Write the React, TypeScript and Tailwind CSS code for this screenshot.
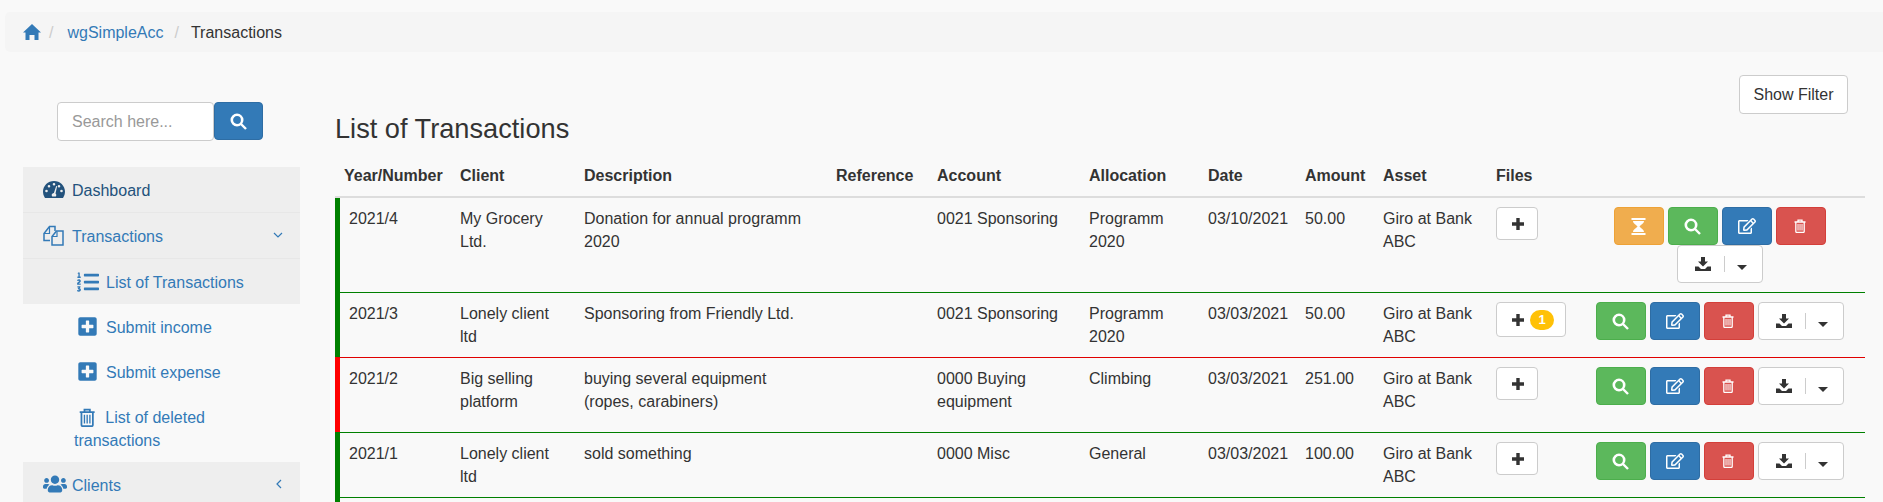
import { ReactNode } from "react";
import { FaListOl, FaPlusSquare, FaRegEdit, FaUsers } from "react-icons/fa";

type Row = {
  num: string;
  client: string;
  desc: string;
  account: string;
  allocation: string;
  date: string;
  amount: string;
  color: "green" | "red";
  height: string;
  files?: number;
  pending?: boolean;
};

const rows: Row[] = [
  { num: "2021/4", client: "My Grocery Ltd.", desc: "Donation for annual programm 2020", account: "0021 Sponsoring", allocation: "Programm 2020", date: "03/10/2021", amount: "50.00", color: "green", height: "h-[94px]", pending: true },
  { num: "2021/3", client: "Lonely client ltd", desc: "Sponsoring from Friendly Ltd.", account: "0021 Sponsoring", allocation: "Programm 2020", date: "03/03/2021", amount: "50.00", color: "green", height: "h-[65px]", files: 1 },
  { num: "2021/2", client: "Big selling platform", desc: "buying several equipment (ropes, carabiners)", account: "0000 Buying equipment", allocation: "Climbing", date: "03/03/2021", amount: "251.00", color: "red", height: "h-[75px]" },
  { num: "2021/1", client: "Lonely client ltd", desc: "sold something", account: "0000 Misc", allocation: "General", date: "03/03/2021", amount: "100.00", color: "green", height: "h-[65px]" },
];

function HomeIcon() {
  return (
    <svg width="18" height="16" viewBox="0 0 18 16" fill="currentColor">
      <path d="M9 0l9 8.500h-2.500V16h-4v-5h-5v5h-4V8.500H0z" />
    </svg>
  );
}

function Hourglass() {
  return (
    <svg width="15" height="17" viewBox="0 0 15 17" fill="currentColor">
      <rect x="0.5" y="0" width="14" height="2" />
      <rect x="0.5" y="15" width="14" height="2" />
      <path d="M2 3h11c0 2.500-3 3.500-4.500 5.500C10 10.500 13 11.500 13 14H2c0-2.500 3-3.500 4.500-5.500C5 6.500 2 5.500 2 3z" />
    </svg>
  );
}

function SearchIcon() {
  return (
    <svg width="17" height="17" viewBox="0 0 17 17" fill="none" stroke="currentColor">
      <circle cx="7" cy="7" r="5.200" strokeWidth="2.600" />
      <path d="M11 11l5 5" strokeWidth="2.400" />
    </svg>
  );
}

function TrashIcon({ size = 14 }: { size?: number }) {
  return (
    <svg width={size * 0.86} height={size} viewBox="0 0 12 14" fill="none" stroke="currentColor" strokeWidth="1.300">
      <path d="M0.500 3h11M4 3V1.200h4V3M1.800 3v9.600c0 .5.400.8.800.8h6.800c.4 0 .8-.3.800-.8V3" />
      <path d="M4 5v6.500M6 5v6.500M8 5v6.500" strokeWidth="1" />
    </svg>
  );
}

function SaveIcon() {
  return (
    <svg width="16" height="14" viewBox="0 0 16 14" fill="currentColor">
      <path d="M6 0h4v4.500h3L8 9.500l-5-5h3z" />
      <path d="M0 9.500h3.500L6 12h4l2.500-2.500H16V14H0z" />
    </svg>
  );
}

function PlusIcon() {
  return (
    <svg width="12" height="12" viewBox="0 0 12 12" fill="currentColor">
      <path d="M4.300 0h3.400v4.300H12v3.400H7.700V12H4.300V7.700H0V4.300h4.300z" />
    </svg>
  );
}

function GaugeIcon() {
  return (
    <svg width="22" height="17" viewBox="0 0 22 17" fill="currentColor">
      <path
        fillRule="evenodd"
        d="M11 0C5 0 0 4.700 0 10.500c0 2.200.6 4.300 1.700 5.900.2.300.5.600.9.600h16.800c.4 0 .7-.3.900-.6 1.100-1.600 1.700-3.700 1.700-5.900C22 4.700 17 0 11 0zM11 2a1.300 1.300 0 110 2.600A1.300 1.300 0 0111 2zM6 4a1.300 1.300 0 110 2.600A1.300 1.300 0 016 4zM16 4a1.300 1.300 0 110 2.600A1.300 1.300 0 0116 4zM3.500 8.700a1.300 1.300 0 110 2.600 1.300 1.300 0 010-2.600zM18.500 8.700a1.300 1.300 0 110 2.600 1.300 1.300 0 010-2.600zM13.200 5l.9.300-1.600 7.200c.5.400.8 1 .8 1.600 0 .5-.2 1-.5 1.400H9.200c-.3-.4-.5-.9-.5-1.400 0-1.200 1-2.200 2.200-2.200z"
      />
    </svg>
  );
}

function FilesIcon() {
  return (
    <svg width="21" height="21" viewBox="0 0 21 21" fill="none" stroke="currentColor" strokeWidth="1.500">
      <path d="M7 15.500H1V8.500L6.500 1.500H12V6" />
      <path d="M1 8.500h5.500V2" strokeWidth="1.200" />
      <path d="M9 20V11.500L13.500 6H20v14z" />
      <path d="M9 11.500h5V6.500" strokeWidth="1.200" />
    </svg>
  );
}

function ChevronDown() {
  return (
    <svg width="10" height="7" viewBox="0 0 10 7" fill="none" stroke="currentColor" strokeWidth="1.200">
      <path d="M1 1l4 4 4-4" />
    </svg>
  );
}

function ChevronLeft() {
  return (
    <svg width="7" height="10" viewBox="0 0 7 10" fill="none" stroke="currentColor" strokeWidth="1.200" className="mr-[1px]">
      <path d="M6 1L2 5l4 4" />
    </svg>
  );
}

function ActionButton({ className, children }: { className: string; children: ReactNode }) {
  return (
    <button className={`flex h-[38px] w-[50px] items-center justify-center rounded-[4px] border text-white ${className}`}>
      {children}
    </button>
  );
}

function Actions({ pending }: { pending?: boolean }) {
  return (
    <div className="flex flex-wrap justify-center gap-x-1">
      {pending && (
        <ActionButton className="border-[#eea236] bg-[#f0ad4e]">
          <Hourglass />
        </ActionButton>
      )}
      <ActionButton className="border-[#4cae4c] bg-[#5cb85c]">
        <SearchIcon />
      </ActionButton>
      <ActionButton className="border-[#2e6da4] bg-[#337ab7]">
        <FaRegEdit className="text-[18px]" />
      </ActionButton>
      <ActionButton className="border-[#d43f3a] bg-[#d9534f]">
        <TrashIcon />
      </ActionButton>
      <div className="flex h-[38px] w-[86px] items-center rounded-[4px] border border-[#ccc] bg-white text-[#333]">
        <span className="flex w-[46px] justify-start pl-[17px]">
          <SaveIcon />
        </span>
        <span className="h-[16px] w-px bg-[#ccc]" />
        <span className="ml-[12px] mt-[6px] h-0 w-0 border-x-[5px] border-t-[5px] border-x-transparent border-t-[#333]" />
      </div>
    </div>
  );
}

function FilesButton({ count }: { count?: number }) {
  return (
    <button className={`flex items-center rounded-[4px] border border-[#ccc] bg-white pl-[15px] text-[#333] ${count ? "h-[35px] w-[70px]" : "h-[33px] w-[42px]"}`}>
      <PlusIcon />
      {count ? (
        <span className="ml-[6px] flex h-[20px] w-[24px] items-center justify-center rounded-[10px] bg-[#ffc107] text-[13px] font-bold text-white">
          {count}
        </span>
      ) : null}
    </button>
  );
}

function SideItem({ icon, label, active, dark, chevron }: { icon: ReactNode; label: string; active?: boolean; dark?: boolean; chevron?: ReactNode }) {
  return (
    <div className={`flex h-[46px] items-center border-b border-[#e7e7e7] pb-[1px] pl-[20px] pr-[17px] ${active ? "bg-[#eee]" : ""} ${dark ? "text-[#23527c]" : "text-[#337ab7]"}`}>
      <span className="flex w-[29px] shrink-0 items-center">{icon}</span>
      <span className="mt-[2px] grow">{label}</span>
      {chevron}
    </div>
  );
}

function SubItem({ icon, label, active }: { icon: ReactNode; label: string; active?: boolean }) {
  return (
    <div className={`flex h-[45px] items-center pl-[54px] text-[#337ab7] ${active ? "bg-[#eee]" : ""}`}>
      <span className="flex w-[29px] shrink-0 items-center">{icon}</span>
      <span className="mt-[2px]">{label}</span>
    </div>
  );
}

function Sidebar() {
  return (
    <aside className="ml-[23px] w-[277px] shrink-0">
      <form className="mt-[50px] flex pl-[34px]">
        <div className="flex h-[39px] w-[157px] items-center rounded-[4px] border border-[#ccc] bg-white pl-[14px] text-[#999]">
          Search here...
        </div>
        <button className="flex h-[38px] w-[49px] items-center justify-center rounded-[4px] border border-[#2e6da4] bg-[#337ab7] text-white">
          <SearchIcon />
        </button>
      </form>
      <nav className="mt-[26px]">
        <SideItem active dark icon={<GaugeIcon />} label="Dashboard" />
        <SideItem active icon={<FilesIcon />} label="Transactions" chevron={<ChevronDown />} />
        <SubItem active icon={<FaListOl className="text-[22px]" />} label="List of Transactions" />
        <SubItem icon={<FaPlusSquare className="text-[21px]" />} label="Submit income" />
        <SubItem icon={<FaPlusSquare className="text-[21px]" />} label="Submit expense" />
        <div className="h-[68px] pl-[51px] pt-[12px] text-[#337ab7]">
          <span className="ml-[5px] mr-[10px] inline-block align-[-4px]">
            <TrashIcon size={19} />
          </span>
          List of deleted
          <br />
          transactions
        </div>
        <SideItem active icon={<FaUsers className="text-[24px]" />} label="Clients" chevron={<ChevronLeft />} />
      </nav>
    </aside>
  );
}

const headers = ["Year/Number", "Client", "Description", "Reference", "Account", "Allocation", "Date", "Amount", "Asset", "Files", ""];
const widths = ["w-[116px]", "w-[124px]", "w-[252px]", "w-[101px]", "w-[152px]", "w-[119px]", "w-[97px]", "w-[78px]", "w-[113px]", "w-[87px]", "w-[291px]"];

function TxTable() {
  return (
    <table className="w-[1530px] table-fixed border-separate border-spacing-0">
      <colgroup>
        {widths.map((w, i) => (
          <col key={i} className={w} />
        ))}
      </colgroup>
      <thead>
        <tr>
          {headers.map((h, i) => (
            <th key={i} className="h-[43px] border-b-2 border-[#ddd] px-[9px] py-[9px] text-left align-bottom font-bold">
              {h}
            </th>
          ))}
        </tr>
      </thead>
      <tbody>
        {rows.map((r, i) => {
          const line = i === 0 ? "" : "border-t";
          const lineColor = r.color === "red" ? "border-[#e00000]" : "border-[#008000]";
          const td = `${line} ${lineColor} px-[9px] pt-[9px] align-top`;
          const bar = r.color === "red" ? "border-l-[#f00]" : "border-l-[#008000]";
          return (
            <tr key={r.num} className={r.height}>
              <td className={`${td} border-l-[5px] ${bar}`}>{r.num}</td>
              <td className={td}>{r.client}</td>
              <td className={td}>{r.desc}</td>
              <td className={td} />
              <td className={td}>{r.account}</td>
              <td className={td}>{r.allocation}</td>
              <td className={td}>{r.date}</td>
              <td className={td}>{r.amount}</td>
              <td className={td}>Giro at Bank ABC</td>
              <td className={td}>
                <FilesButton count={r.files} />
              </td>
              <td className={td}>
                <Actions pending={r.pending} />
              </td>
            </tr>
          );
        })}
        <tr className="h-[40px]">
          <td className="border-t border-l-[5px] border-[#008000]" />
          <td colSpan={10} className="border-t border-[#008000]" />
        </tr>
      </tbody>
    </table>
  );
}

export default function App() {
  return (
    <div className="h-[502px] overflow-hidden bg-[#f9f9f9] font-['Liberation_Sans',Arial,sans-serif] text-[16px] leading-[23px] text-[#333]">
      <div className="pt-[12px] pl-[5px]">
        <nav className="flex h-[40px] items-center rounded-l-[5px] bg-[#f5f5f5] pl-[18px]">
          <span className="text-[#337ab7]">
            <HomeIcon />
          </span>
          <span className="ml-[8px] text-[#ccc]">/</span>
          <span className="ml-[14px] text-[#337ab7]">wgSimpleAcc</span>
          <span className="ml-[11px] text-[#ccc]">/</span>
          <span className="ml-[12px]">Transactions</span>
        </nav>
      </div>
      <div className="flex">
        <Sidebar />
        <main className="ml-[35px] w-[1530px] shrink-0">
          <div className="mt-[23px] flex justify-end pr-[17px]">
            <button className="h-[39px] w-[109px] rounded-[4px] border border-[#ccc] bg-white">Show Filter</button>
          </div>
          <h3 className="h-[30px] text-[27.2px] leading-[30px] font-normal">List of Transactions</h3>
          <div className="mt-[11px]">
            <TxTable />
          </div>
        </main>
      </div>
    </div>
  );
}
